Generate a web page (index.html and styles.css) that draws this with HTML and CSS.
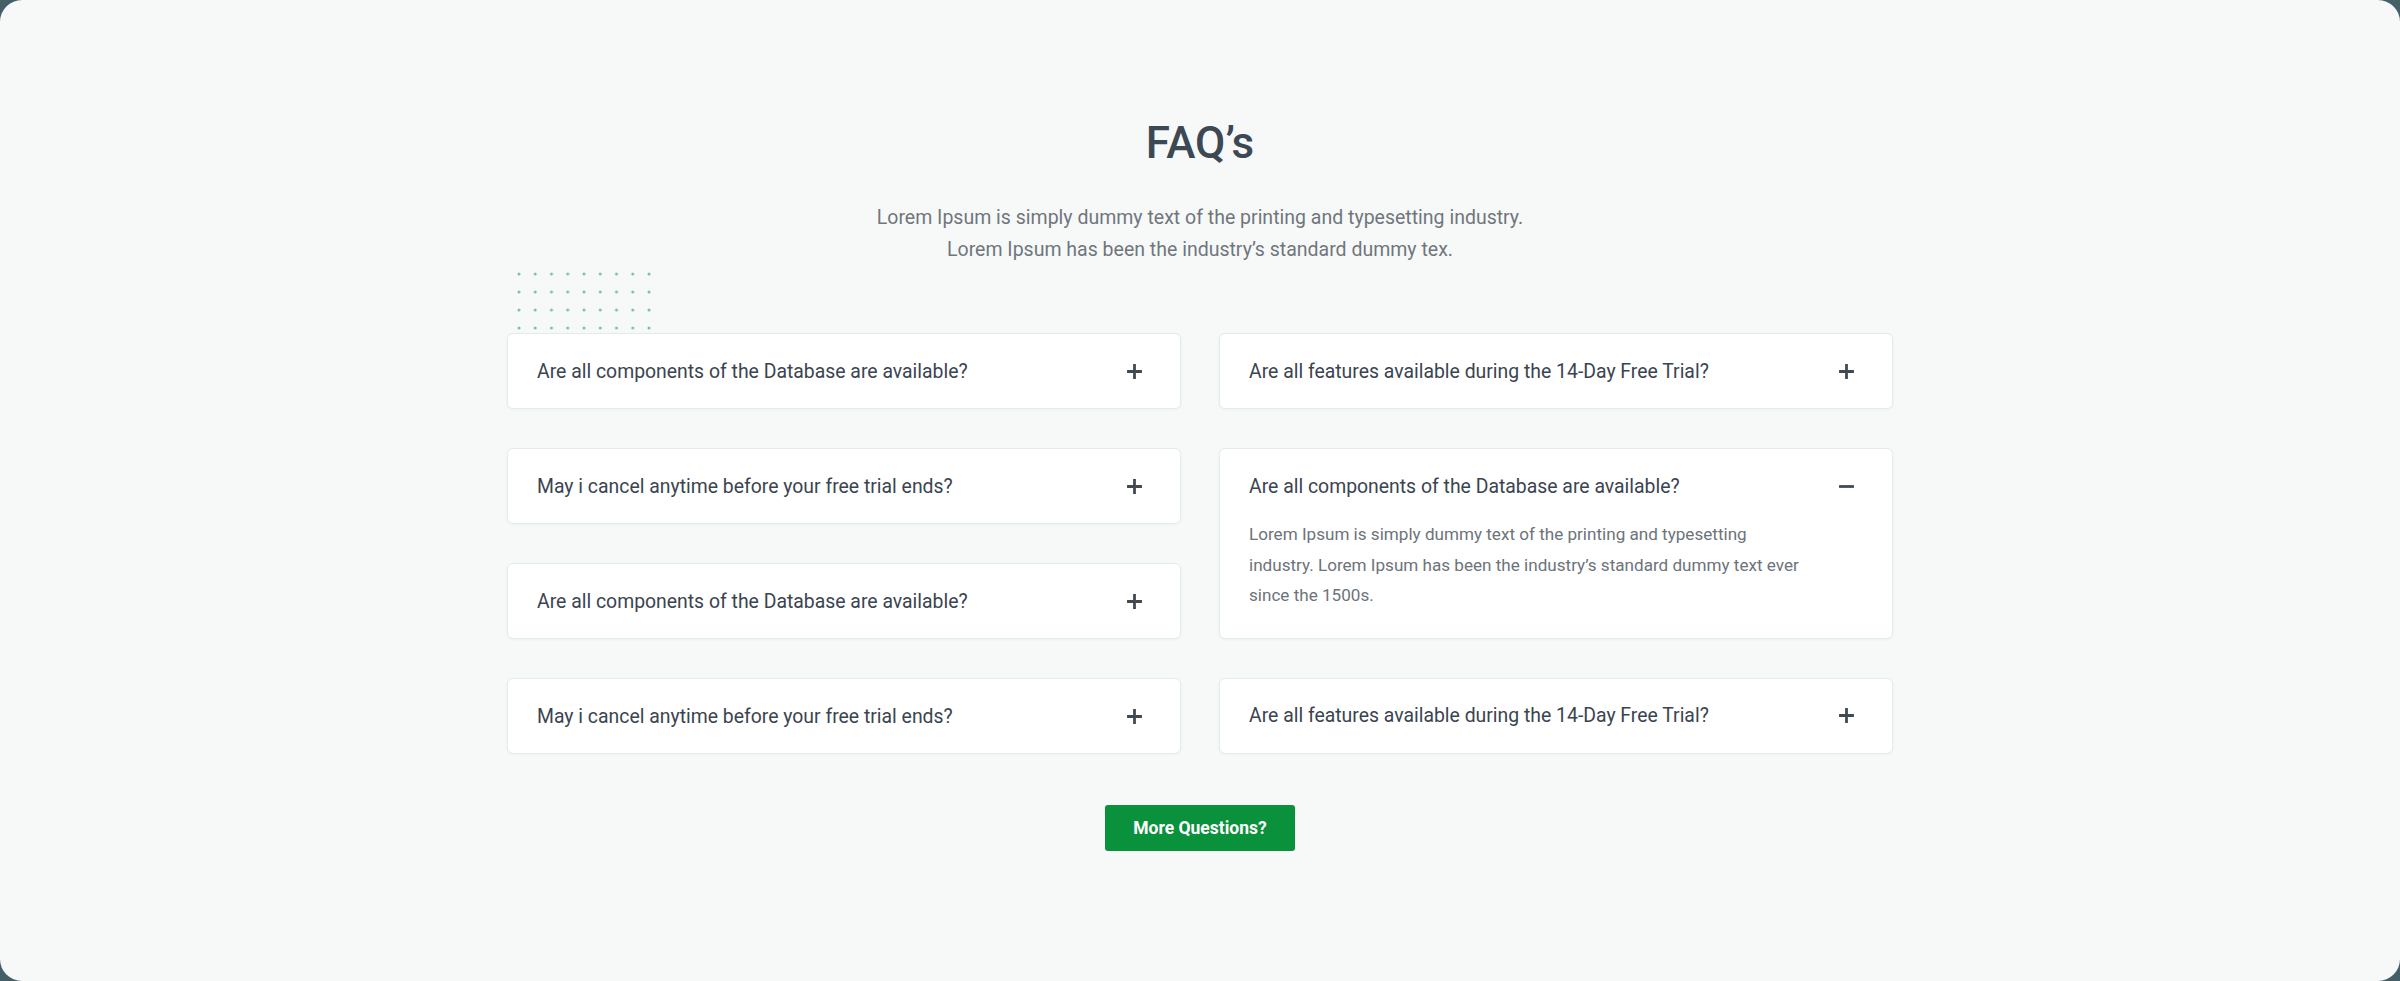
FILE: index.html
```html
<!DOCTYPE html>
<html lang="en">
<head>
<meta charset="utf-8">
<title>FAQ's</title>
<link rel="stylesheet" href="styles.css">
</head>
<body>
<main class="frame">
  <section class="faq">
    <h1 class="faq-title">FAQ’s</h1>
    <p class="faq-sub">Lorem Ipsum is simply dummy text of the printing and typesetting industry.<br>Lorem Ipsum has been the industry’s standard dummy tex.</p>

    <div class="faq-grid">
      <svg class="dots" width="136" height="60" viewBox="0 0 136 60" aria-hidden="true">
        <defs>
          <pattern id="dp" x="0" y="0" width="16.25" height="18" patternUnits="userSpaceOnUse">
            <circle cx="2" cy="2" r="1.5" fill="#7fbcaa"/>
          </pattern>
        </defs>
        <rect width="136" height="60" fill="url(#dp)"/>
      </svg>

      <div class="col">
        <div class="card">
          <div class="q"><span>Are all components of the Database are available?</span>
            <svg class="ic" viewBox="0 0 16 16"><path d="M8 1v14M1 8h14"/></svg></div>
        </div>
        <div class="card">
          <div class="q"><span>May i cancel anytime before your free trial ends?</span>
            <svg class="ic" viewBox="0 0 16 16"><path d="M8 1v14M1 8h14"/></svg></div>
        </div>
        <div class="card">
          <div class="q"><span>Are all components of the Database are available?</span>
            <svg class="ic" viewBox="0 0 16 16"><path d="M8 1v14M1 8h14"/></svg></div>
        </div>
        <div class="card">
          <div class="q"><span>May i cancel anytime before your free trial ends?</span>
            <svg class="ic" viewBox="0 0 16 16"><path d="M8 1v14M1 8h14"/></svg></div>
        </div>
      </div>

      <div class="col">
        <div class="card">
          <div class="q"><span>Are all features available during the 14-Day Free Trial?</span>
            <svg class="ic" viewBox="0 0 16 16"><path d="M8 1v14M1 8h14"/></svg></div>
        </div>
        <div class="card open">
          <div class="q"><span>Are all components of the Database are available?</span>
            <svg class="ic" viewBox="0 0 16 16"><path d="M1 8h14"/></svg></div>
          <p class="a">Lorem Ipsum is simply dummy text of the printing and typesetting industry. Lorem Ipsum has been the industry’s standard dummy text ever since the 1500s.</p>
        </div>
        <div class="card">
          <div class="q"><span>Are all features available during the 14-Day Free Trial?</span>
            <svg class="ic" viewBox="0 0 16 16"><path d="M8 1v14M1 8h14"/></svg></div>
        </div>
      </div>
    </div>

    <button class="more">More Questions?</button>
  </section>
</main>
</body>
</html>
```

FILE: styles.css
```css
* { box-sizing: border-box; }
html, body { margin: 0; padding: 0; }
body {
  background: #455f68;
  font-family: Roboto, "Liberation Sans", Arial, sans-serif;
}
.frame {
  width: 2400px;
  height: 981px;
  background: #f7f9f9;
  border-radius: 22px;
  overflow: hidden;
}
.faq {
  display: flex;
  flex-direction: column;
  align-items: center;
  padding-top: 118px;
}
.faq-title {
  margin: 0;
  font-size: 44px;
  line-height: 50px;
  font-weight: 500;
  color: #3c4854;
}
.faq-sub {
  margin: 34px 0 0;
  text-align: center;
  font-size: 19.5px;
  line-height: 32px;
  color: #70767c;
}
.faq-grid {
  position: relative;
  margin-top: 67px;
  display: flex;
  gap: 38px;
  width: 1386px;
}
.dots {
  position: absolute;
  left: 10px;
  top: -61px;
  z-index: 0;
}
.col {
  flex: 1;
  display: flex;
  flex-direction: column;
  gap: 39px;
  position: relative;
  z-index: 1;
}
.card {
  background: #fff;
  border: 1px solid #e2ecea;
  border-radius: 6px;
  box-shadow: 0 1px 3px rgba(30, 60, 60, 0.04);
}
.q {
  height: 74px;
  display: flex;
  align-items: center;
  justify-content: space-between;
  padding: 0 37px 0 29px;
  font-size: 19.4px;
  color: #3a4450;
}
.ic {
  width: 17px;
  height: 17px;
  fill: none;
  stroke: #3f4952;
  stroke-width: 2.6;
}
.a {
  margin: -4px 0 0;
  padding: 0 29px 27px;
  max-width: 618px;
  font-size: 17.1px;
  line-height: 30.5px;
  color: #6d737a;
}
.more {
  margin-top: 51px;
  width: 190px;
  height: 46px;
  border: 0;
  border-radius: 3px;
  background: #0a913b;
  color: #fff;
  font-family: Roboto, "Liberation Sans", Arial, sans-serif;
  font-size: 17.5px;
  font-weight: 700;
  padding: 0;
}
```
